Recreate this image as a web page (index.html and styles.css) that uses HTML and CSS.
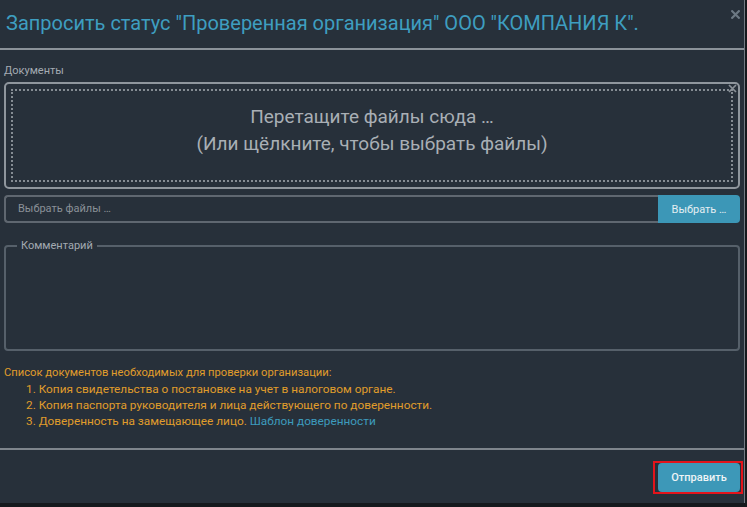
FILE: index.html
```html
<!DOCTYPE html>
<html lang="ru">
<head>
<meta charset="utf-8">
<title>Запросить статус</title>
<link rel="stylesheet" href="styles.css">
</head>
<body>
<div class="modal">
  <header class="modal-header">
    <h4 class="modal-title">Запросить статус "Проверенная организация" ООО "КОМПАНИЯ К".</h4>
    <button class="close" type="button" aria-label="Закрыть">
      <svg width="9" height="9" viewBox="0 0 9 9"><path d="M1.2 1.2L7.8 7.8M7.8 1.2L1.2 7.8" stroke="currentColor" stroke-width="2.2" stroke-linecap="square"/></svg>
    </button>
  </header>
  <main class="modal-body">
    <div class="field-label">Документы</div>
    <div class="dropzone">
      <div class="dropzone-inner">
        <div class="drop-text">Перетащите файлы сюда …<br>(Или щёлкните, чтобы выбрать файлы)</div>
      </div>
      <span class="drop-close">
        <svg width="9" height="9" viewBox="0 0 9 9"><path d="M1 1L8 8M8 1L1 8" stroke="currentColor" stroke-width="1.7"/></svg>
      </span>
    </div>
    <div class="input-group">
      <div class="file-input">Выбрать файлы …</div>
      <button class="btn-browse" type="button">Выбрать …</button>
    </div>
    <fieldset class="comment">
      <legend>Комментарий</legend>
      <div class="comment-area"></div>
    </fieldset>
    <div class="notes">
      <div class="note-head">Список документов необходимых для проверки организации:</div>
      <div class="note-item">1. Копия свидетельства о постановке на учет в налоговом органе.</div>
      <div class="note-item">2. Копия паспорта руководителя и лица действующего по доверенности.</div>
      <div class="note-item">3. Доверенность на замещающее лицо. <a href="#" class="link">Шаблон доверенности</a></div>
    </div>
  </main>
  <footer class="modal-footer">
    <span class="highlight"><button class="btn-send" type="button">Отправить</button></span>
  </footer>
</div>
</body>
</html>
```
FILE: styles.css
```css
html, body {
  margin: 0;
  padding: 0;
}
body {
  background: #15191d;
  font-family: Roboto, "Liberation Sans", Arial, sans-serif;
  width: 747px;
  height: 507px;
  overflow: hidden;
}
.modal {
  width: 744px;
  height: 503px;
  background: #27303a;
  border-right: 1px solid #737b83;
  display: flex;
  flex-direction: column;
}
.modal-header {
  display: flex;
  align-items: flex-start;
  padding: 11px 4px 13px 6px;
  border-bottom: 2px solid #8b9299;
}
.modal-title {
  margin: 0;
  flex: 1;
  font-size: 20px;
  line-height: 24px;
  font-weight: 400;
  color: #3e9ec0;
  white-space: nowrap;
}
.close {
  margin: -1px 0 0 0;
  padding: 0;
  border: 0;
  background: none;
  color: #6c7883;
  width: 9px;
  height: 9px;
  display: flex;
}
.modal-body {
  padding: 14px 4px 19px 4px;
}
.field-label {
  font-size: 11px;
  line-height: 13px;
  color: #a4abb2;
  margin-bottom: 5px;
}
.dropzone {
  position: relative;
  border: 2px solid #8f969d;
  border-radius: 5px;
  padding: 5px;
}
.dropzone-inner {
  border: 2px dotted #858c93;
  height: 77px;
  padding-top: 12px;
  box-sizing: content-box;
  text-align: center;
}
.drop-text {
  font-size: 19px;
  line-height: 27px;
  color: #a9afb5;
}
.drop-close {
  position: absolute;
  right: 1px;
  top: 0;
  color: #8a9198;
  display: flex;
}
.input-group {
  display: flex;
  margin-top: 6px;
  height: 28px;
}
.file-input {
  flex: 1;
  border: 2px solid #5f6770;
  border-right: 0;
  border-radius: 4px 0 0 4px;
  padding-left: 12px;
  font-size: 11px;
  line-height: 24px;
  color: #8a9198;
}
.btn-browse {
  width: 82px;
  border: 0;
  border-radius: 0 4px 4px 0;
  background: #3c97b7;
  color: #e4eef2;
  font-family: inherit;
  font-size: 11px;
  padding: 0;
}
.comment {
  margin: 16px 0 0 0;
  padding: 0 12px;
  border: 2px solid #56606a;
  border-radius: 4px;
  min-width: 0;
}
.comment legend {
  padding: 0 4px;
  margin-left: -1px;
  font-size: 11px;
  line-height: 13px;
  color: #a3aab1;
}
.comment-area {
  height: 97px;
}
.notes {
  margin-top: 14px;
  line-height: 16px;
  color: #e09d2b;
}
.note-head {
  font-size: 11.2px;
}
.note-item {
  padding-left: 22px;
  font-size: 11.8px;
}
.link {
  color: #3d9bbd;
  text-decoration: none;
}
.modal-footer {
  margin-top: auto;
  border-top: 2px solid #7e858c;
  display: flex;
  justify-content: flex-end;
  padding: 11px 1px 9px 0;
}
.highlight {
  display: flex;
  border: 2px solid #e3141b;
  padding: 0 1px 0 3px;
}
.btn-send {
  width: 82px;
  height: 29px;
  border: 0;
  border-radius: 4px;
  background: #3d98b8;
  color: #eef4f6;
  font-family: inherit;
  font-size: 11px;
  font-weight: 500;
  padding: 0;
}
```
